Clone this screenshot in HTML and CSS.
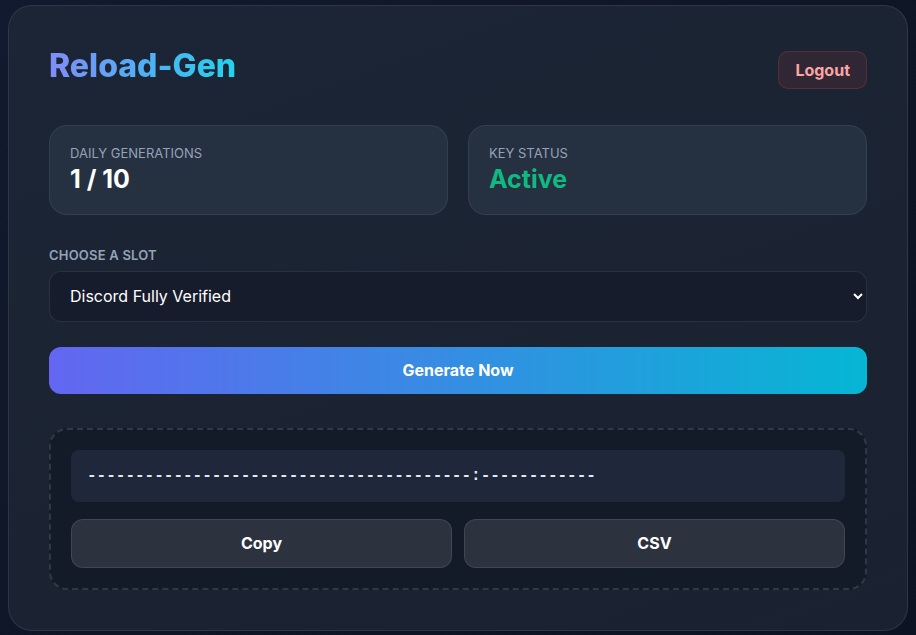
FILE: index.html
```html
<!DOCTYPE html>
<html>
<head>
  <meta charset="utf-8">
  <title>Reload-Gen</title>
  <link rel="stylesheet" href="styles.css">
</head>
<body>
  <div class="card">
    <div class="header">
      <h1 class="brand">Reload-Gen</h1>
      <button class="logout">Logout</button>
    </div>

    <div class="stats">
      <div class="stat">
        <div class="stat-label">Daily Generations</div>
        <div class="stat-value">1 / 10</div>
      </div>
      <div class="stat">
        <div class="stat-label">Key Status</div>
        <div class="stat-value active">Active</div>
      </div>
    </div>

    <label class="field-label" for="slot">Choose a slot</label>
    <select id="slot" class="slot-select">
      <option>Discord Fully Verified</option>
    </select>

    <button class="generate">Generate Now</button>

    <div class="result">
      <div class="output">----------------------------------------:------------</div>
      <div class="actions">
        <button class="action">Copy</button>
        <button class="action">CSV</button>
      </div>
    </div>
  </div>
</body>
</html>
```

FILE: styles.css
```css
* {
  box-sizing: border-box;
}

html, body {
  height: 100%;
}

body {
  margin: 0;
  padding: 0 8px;
  display: flex;
  align-items: center;
  justify-content: center;
  font-family: Inter, 'Noto Sans', sans-serif;
  color: #fff;
  background: linear-gradient(135deg, #111a2e 0%, #0f1626 50%, #0c1322 100%);
}

.card {
  width: 100%;
  max-width: 900px;
  padding: 40px;
  border: 1px solid rgba(255, 255, 255, 0.09);
  border-radius: 24px;
  background: linear-gradient(160deg, #1c2535 0%, #1a2231 100%);
}

.header {
  display: flex;
  justify-content: space-between;
  align-items: flex-start;
  margin-bottom: 36px;
}

.brand {
  margin: 0;
  font-size: 32px;
  line-height: 40px;
  font-weight: 800;
  background: linear-gradient(90deg, #818cf8 0%, #22d3ee 100%);
  background-size: 188px 100%;
  background-repeat: no-repeat;
  -webkit-background-clip: text;
  background-clip: text;
  color: transparent;
}

.logout {
  margin-top: 5px;
  height: 38px;
  padding: 0 16px;
  border: 1px solid rgba(239, 68, 68, 0.22);
  border-radius: 10px;
  background: rgba(239, 68, 68, 0.1);
  color: #fca5a5;
  font-family: inherit;
  font-size: 16px;
  font-weight: 700;
}

.stats {
  display: grid;
  grid-template-columns: 1fr 1fr;
  gap: 20px;
}

.stat {
  padding: 19px 20px 20px;
  border: 1px solid rgba(255, 255, 255, 0.07);
  border-radius: 18px;
  background: #253041;
}

.stat-label {
  font-size: 13px;
  line-height: 16px;
  color: #94a3b8;
  text-transform: uppercase;
}

.stat-value {
  margin-top: 3px;
  font-size: 25px;
  line-height: 30px;
  font-weight: 700;
}

.stat-value.active {
  color: #10b981;
}

.field-label {
  display: block;
  margin: 32px 0 8px;
  font-size: 13px;
  line-height: 16px;
  font-weight: 600;
  color: #94a3b8;
  text-transform: uppercase;
  letter-spacing: 0.2px;
}

.slot-select {
  display: block;
  width: 100%;
  height: 51px;
  padding: 0 4px 0 16px;
  border: 1px solid rgba(255, 255, 255, 0.09);
  border-radius: 12px;
  background: #161c2b;
  color: #fff;
  color-scheme: dark;
  font-family: inherit;
  font-size: 16px;
}

.generate {
  display: block;
  width: 100%;
  height: 47px;
  margin-top: 25px;
  border: 0;
  border-radius: 12px;
  background: linear-gradient(90deg, #6366f1 0%, #06b6d4 100%);
  color: #fff;
  font-family: inherit;
  font-size: 16px;
  font-weight: 700;
}

.result {
  margin-top: 34px;
  padding: 20px;
  border: 2px dashed rgba(255, 255, 255, 0.13);
  border-radius: 18px;
  background: #141b28;
}

.output {
  height: 52px;
  padding: 0 16px;
  border-radius: 8px;
  background: #1e283a;
  color: #e2e8f0;
  font-family: 'Liberation Mono', monospace;
  font-size: 16px;
  font-weight: 700;
  line-height: 52px;
  white-space: nowrap;
  overflow: hidden;
}

.actions {
  display: grid;
  grid-template-columns: 1fr 1fr;
  gap: 12px;
  margin-top: 17px;
}

.action {
  height: 49px;
  border: 1px solid rgba(255, 255, 255, 0.1);
  border-radius: 12px;
  background: #2c333f;
  color: #fff;
  font-family: inherit;
  font-size: 16px;
  font-weight: 700;
}
```
